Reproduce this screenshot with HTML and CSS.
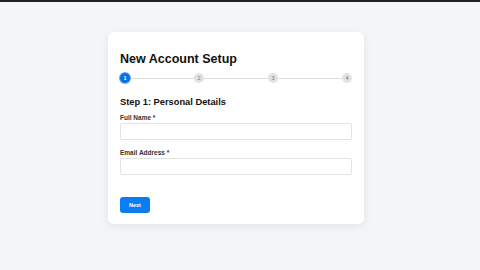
FILE: index.html
```html
<!DOCTYPE html>
<html lang="en">
<head>
  <meta charset="UTF-8">
  <title>New Account Setup</title>
  <meta name="viewport" content="width=device-width, initial-scale=1.0">
  <link rel="stylesheet" href="styles.css">
</head>
<body>
  <div class="card">
    <h1 class="title">New Account Setup</h1>
    <div class="steps">
      <span class="step active">1</span>
      <span class="step">2</span>
      <span class="step">3</span>
      <span class="step">4</span>
    </div>
    <h2 class="subtitle">Step 1: Personal Details</h2>
    <div class="field">
      <label for="name">Full Name *</label>
      <input type="text" id="name">
    </div>
    <div class="field">
      <label for="email">Email Address *</label>
      <input type="email" id="email">
    </div>
    <button class="next">Next</button>
  </div>
</body>
</html>
```

FILE: styles.css
```css
body {
  margin: 0; min-height: 268px; background: #f4f5f9;
  border-top: 2px solid #222;
  font-family: "Liberation Sans", Arial, sans-serif; color: #111;
}
.card {
  width: 256px; box-sizing: border-box; margin: 30px 0 0 108px;
  padding: 19px 12px 11px; background: #fff; border-radius: 6px;
  box-shadow: 0 2px 8px rgba(0,0,0,0.08);
}
.title { margin: 0; font-size: 12.5px; line-height: 17px; font-weight: bold; }
.steps {
  position: relative; display: flex; justify-content: space-between;
  margin-top: 5px;
}
.steps::before {
  content: ""; position: absolute; left: 5px; right: 5px; top: 5px;
  height: 1px; background: #ddd;
}
.step {
  position: relative; width: 10px; height: 10px; border-radius: 50%;
  background: #e2e2e2; color: #777; font-size: 5.5px; line-height: 10px;
  text-align: center;
}
.step.active { background: #0a6fe0; color: #fff; font-weight: bold; box-shadow: 0 0 0 1px #6aa8f0; }
.subtitle { margin: 13px 0 0; font-size: 9.3px; line-height: 12px; font-weight: bold; }
.field { margin-top: 6px; }
.field + .field { margin-top: 9px; }
.field label {
  display: block; font-size: 6.5px; line-height: 8px; font-weight: bold;
  color: #333; margin-bottom: 1px;
}
.field input {
  display: block; width: 100%; box-sizing: border-box; height: 17px;
  border: 1px solid #e3e3e3; border-radius: 2px; background: #fff;
}
.next {
  display: block; margin-top: 22px; width: 30px; height: 16px; padding: 0;
  border: none; border-radius: 3px; background: #0b7cf2; color: #fff;
  font-family: inherit; font-size: 5.5px; font-weight: bold;
}
```
